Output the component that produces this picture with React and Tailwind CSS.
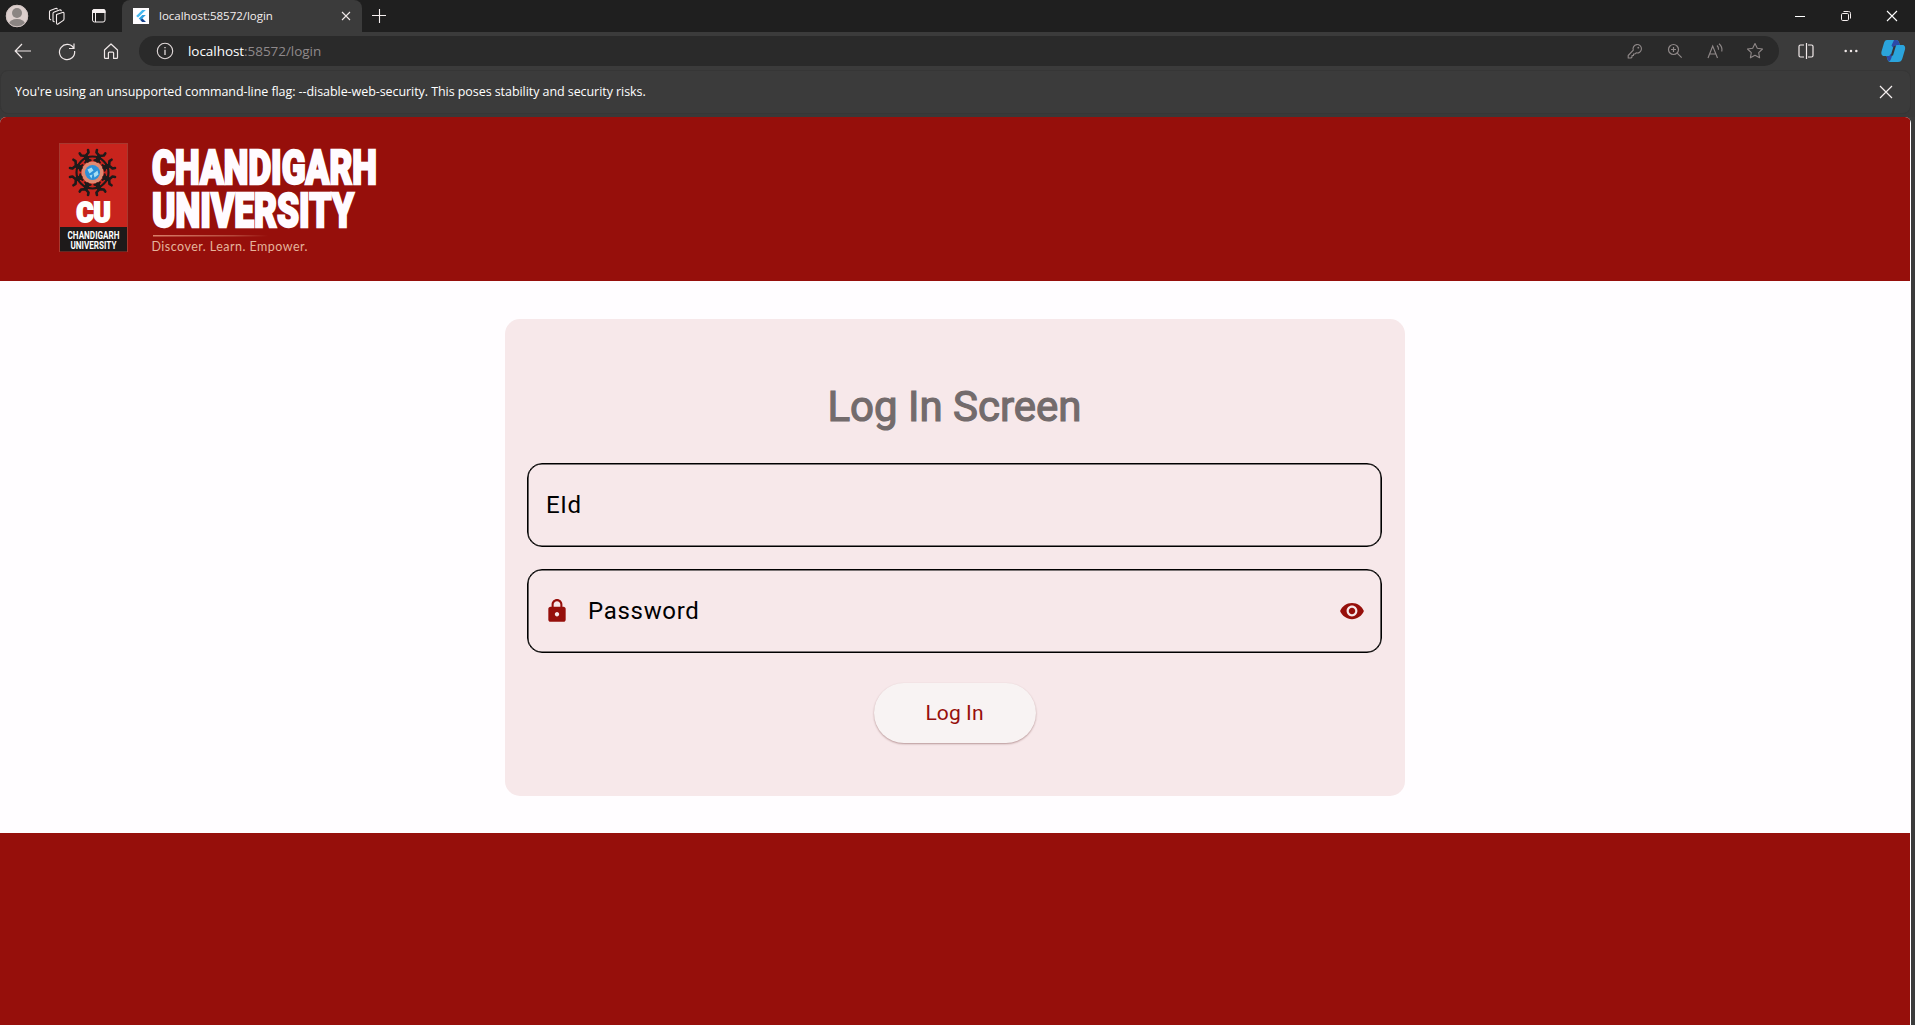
import React from "react";

function Svg({ w, h, vb, className, children }) {
  return (
    <svg width={w} height={h} viewBox={vb || `0 0 ${w} ${h}`} fill="none" className={`block shrink-0 overflow-visible ${className || ""}`}>
      {children}
    </svg>
  );
}

function Avatar() {
  return (
    <Svg w={24} h={24} className="ml-[5px]">
      <clipPath id="avatar"><circle cx="12" cy="12" r="11" /></clipPath>
      <circle cx="12" cy="12" r="11" fill="#dccfcd" />
      <g clipPath="url(#avatar)" fill="#8b8583">
        <circle cx="12" cy="9" r="5" />
        <ellipse cx="12" cy="20" rx="8" ry="5" />
      </g>
      <circle cx="12" cy="12" r="10.8" stroke="#cfc2c0" />
    </Svg>
  );
}

function TabStrip() {
  return (
    <div className="flex h-8 bg-[#1f1f1f]">
      <div className="flex w-[122px] shrink-0 items-center">
        <Avatar />
        <Svg w={17} h={17} className="ml-[19px]">
          <g stroke="#f3ecec" strokeWidth="1.1" strokeLinejoin="round" strokeLinecap="round">
            <path d="M8.500 6.500 14.500 4.500c.9-.3 1.500.1 1.500 1V11c0 .8-.3 1.200-1 1.600L10 16c-.9.500-1.500 0-1.500-.9z" />
            <path d="M5 13V5.500c0-.7.2-1 .8-1.300L11.500 2c.8-.3 1.500 0 1.800.7M5 13l1.200.7" />
            <path d="M1.500 11V3.700c0-.7.2-1 .8-1.300L7.500.5c.8-.3 1.500-.1 1.800.5M1.500 11l1.200.7" />
          </g>
        </Svg>
        <Svg w={16} h={16} className="ml-[26px]">
          <rect x="1.500" y="1.500" width="12.500" height="12.500" rx="2" stroke="#f6f0f0" />
          <path d="M1 3.500C1 2 2 1 3.500 1h9C14 1 14.500 2 14.500 3.500V5H1z" fill="#f6f0f0" />
          <path d="M4.500 5v9" stroke="#f6f0f0" />
        </Svg>
      </div>
      <div className="flex w-[240px] items-center rounded-t-lg bg-[#3b3b3b]">
        <Svg w={16} h={16} className="ml-[11px]">
          <rect width="16" height="16" fill="#fffdff" />
          <path d="M9.300 2h3.500L5 9.600 3.200 7.900z" fill="#45b8ef" />
          <path d="M9.300 7h3.500L9.300 10.500l3.500 3.500H9.300L5.800 10.500z" fill="#2f9fe0" />
          <path d="m7.600 12.200 1.700-1.700 3.500 3.500H9.300z" fill="#1c3f88" />
        </Svg>
        <span className="ml-[10px] w-[113px] whitespace-nowrap font-['Open_Sans',sans-serif] text-[11.500px] leading-4 tracking-[-0.02px] text-[#f5efef]">
          localhost:58572/login
        </span>
        <Svg w={10} h={10} className="ml-[69px]">
          <path d="m1 1 8 8M9 1 1 9" stroke="#efe8e8" strokeWidth="1.100" />
        </Svg>
      </div>
      <Svg w={14} h={14} className="ml-[10px] mt-[9px]">
        <path d="M7.500 0v14M0 6.500h14" stroke="#f6f0f0" strokeWidth="1.100" />
      </Svg>
      <div className="ml-auto flex items-center">
        <Svg w={10} h={10} className="mr-[36px]">
          <path d="M0 5.500h10" stroke="#fff" />
        </Svg>
        <Svg w={10} h={10} className="mr-[36px]">
          <rect x=".5" y="2.500" width="7" height="7" rx="1.200" stroke="#f6f0f0" />
          <path d="M2.500.5h5c1.300 0 2 .7 2 2v5" stroke="#f6f0f0" />
        </Svg>
        <Svg w={10} h={10} className="mr-[18px]">
          <path d="m0 0 10 10M10 0 0 10" stroke="#fff" strokeWidth="1.100" />
        </Svg>
      </div>
    </div>
  );
}

function Toolbar() {
  return (
    <div className="flex h-[38px] items-center bg-[#3b3b3b]">
      <Svg w={18} h={18} className="ml-[14px]">
        <path d="M17 9H1.500M8 2 1.200 9 8 16" stroke="#efe8e8" strokeWidth="1.200" />
      </Svg>
      <Svg w={18} h={18} className="ml-[26px]">
        <path d="M15.800 6.500A7.600 7.600 0 1 0 16.600 9M16 1.500v5h-5" stroke="#efe8e8" strokeWidth="1.200" />
      </Svg>
      <Svg w={16} h={18} className="ml-[27px]">
        <path d="M1.500 8 8 2l6.500 6v7.500c0 .6-.3.900-.9.900h-3V11c0-.6-.3-.9-.9-.9H6.300c-.6 0-.9.300-.9.900v5.400h-3c-.600 0-.900-.3-.900-.9z" stroke="#efe8e8" strokeWidth="1.200" strokeLinejoin="round" />
      </Svg>
      <div className="ml-5 flex h-[30px] w-[1640px] items-center rounded-full bg-[#2a2a2a]">
        <Svg w={18} h={18} className="ml-[17px]">
          <circle cx="9" cy="9" r="7.700" stroke="#e2dada" strokeWidth="1.100" />
          <path d="M9 7.800V13M9 4.900v1.400" stroke="#e2dada" strokeWidth="1.300" />
        </Svg>
        <span className="ml-[14px] whitespace-nowrap font-['Open_Sans',sans-serif] text-[13.500px] leading-5 tracking-[-0.05px] text-[#8f898b]">
          <span className="text-white">localhost</span>:58572/login
        </span>
        <div className="ml-auto mr-[15px] flex items-center text-[#8f8888]">
          <Svg w={16} h={16}>
            <path d="M6.300 7.200a4.200 4.200 0 1 1 2.800 2.600L8 11H6.500v1.500H5V14l-1 1H1.200v-2.500z" stroke="currentColor" strokeWidth="1.100" strokeLinejoin="round" />
            <circle cx="11.300" cy="4.700" r=".9" fill="currentColor" />
          </Svg>
          <Svg w={16} h={16} className="ml-6">
            <circle cx="6.500" cy="6.500" r="5" stroke="currentColor" strokeWidth="1.200" />
            <path d="m10.200 10.200 4.500 4.500M6.500 4v5M4 6.500h5" stroke="currentColor" strokeWidth="1.200" />
          </Svg>
          <Svg w={17} h={16} className="ml-6">
            <path d="M1 15 5.700 3 10.500 15M2.600 11h6.200M10 2.500c1.300 1.200 1.700 2.600 1.500 4.200M12 .7c2.500 2 3.400 4.600 2.800 7.800" stroke="currentColor" strokeWidth="1.150" />
          </Svg>
          <Svg w={18} h={18} className="ml-[22px]">
            <path d="m9 1.500 2.300 4.800 5.200.7-3.800 3.600.9 5.200L9 13.300l-4.600 2.500.9-5.200L1.500 7l5.200-.7z" stroke="currentColor" strokeWidth="1.100" strokeLinejoin="round" />
          </Svg>
        </div>
      </div>
      <Svg w={16} h={16} className="ml-[19px]">
        <path d="M6 2H2.500C1.500 2 1 2.500 1 3.500v9c0 1 .5 1.500 1.500 1.500H6M10 2h3.500c1 0 1.500.5 1.500 1.500v9c0 1-.5 1.500-1.500 1.500H10M8.500 0v16" stroke="#f3ecec" strokeWidth="1.200" />
      </Svg>
      <Svg w={14} h={4} className="ml-[30px]">
        <g fill="#efe8e8"><circle cx="1.700" cy="2" r="1.250" /><circle cx="7" cy="2" r="1.250" /><circle cx="12.300" cy="2" r="1.250" /></g>
      </Svg>
      <Svg w={24} h={24} className="ml-[23px]">
        <path d="M6 1h9c2 0 2.500 1 3 2.500L19 6h2.500C24 6 24.500 8.500 24 10.500l-2.500 8.500c-1 3-2 4-4.500 4H9.500c-2 0-2.500-1-3-2.500L5.500 17H3c-2.500 0-3-2.500-2.500-4.500L3 4c.7-2 1.500-3 3-3z" fill="#2ba4dc" />
        <path d="M13 1h2c2 0 2.500 1 3 2.500L19 6h-2.500c-1.800 0-2.500 1-3 2.500l-1.500 0-1.500-2z" fill="#2c49a8" />
        <path d="M5.500 17H7c1.500 0 2-.8 2.500-2.300l1.500 2.300-1 3c-.5 1.500-1.200 2.300-2.200 2-.7-.2-1-1-1.300-1.500z" fill="#2c49a8" />
        <path d="M12.500 7.500 15 6.500 12 16.500 9.700 16.800z" fill="#343338" />
      </Svg>
    </div>
  );
}

function InfoBar() {
  return (
    <div className="h-[47px] bg-[#393939]">
      <div className="flex h-[44px] w-[1911px] items-center rounded-[8px] border border-[#363636] bg-[#3b3b3b]">
        <span className="ml-[14px] whitespace-nowrap font-['Open_Sans',sans-serif] text-[12.500px] leading-5 tracking-[-0.065px] text-white">
          You're using an unsupported command-line flag: --disable-web-security. This poses stability and security risks.
        </span>
        <Svg w={12} h={12} className="ml-auto mr-[18px]">
          <path d="m0 0 12 12M12 0 0 12" stroke="#f6f0f0" strokeWidth="1.200" />
        </Svg>
      </div>
    </div>
  );
}

const FIGURES = [22.5, 67.5, 112.5, 157.5, 202.5, 247.5, 292.5, 337.5];

function Logo() {
  return (
    <Svg w={320} h={110}>
      <rect x=".5" y=".5" width="68" height="108" fill="#c8241d" stroke="#a8382f" />
      <rect x="1" y="84" width="67" height="24.500" fill="#1e1a1a" />
      <g transform="translate(33.500 29.500)">
        <circle r="11" fill="#e08a72" />
        <circle r="16" stroke="#1e1a1a" strokeWidth="2.200" />
        {FIGURES.map((a) => (
          <g key={a} transform={`rotate(${a})`} stroke="#1e1a1a" strokeLinecap="round" strokeLinejoin="round">
            <path d="M0-13v-4" strokeWidth="4.500" />
            <path d="M0-18-4-20-4.500-22.500M0-18l4-2 .5-2.500" strokeWidth="2.600" />
            <path d="M0-14-3-12M0-14l3 2" strokeWidth="2" />
          </g>
        ))}
        <circle r="7.500" fill="#2b8fd8" />
        <path d="M-5-3-1-5 1-2-3 1zM1 1l4-3 1 4-4 3zM-3 3l3-1-1 4z" fill="#a5def4" />
      </g>
      <text x="17.500" y="78.500" textLength="34" lengthAdjust="spacingAndGlyphs" fill="#fff" stroke="#fff" strokeWidth="2" className="font-[Roboto,sans-serif] text-[27px] font-black">CU</text>
      <text x="8.500" y="96" textLength="52" lengthAdjust="spacingAndGlyphs" fill="#fff" className="font-[Roboto,sans-serif] text-[10px] font-bold">CHANDIGARH</text>
      <text x="11.500" y="105.500" textLength="46" lengthAdjust="spacingAndGlyphs" fill="#fff" className="font-[Roboto,sans-serif] text-[10px] font-bold">UNIVERSITY</text>
      <g fill="#fffbff" stroke="#fffbff" strokeWidth="2.400" className="font-[Roboto,sans-serif] text-[47.500px] font-black">
        <text x="93" y="40.600" textLength="225" lengthAdjust="spacingAndGlyphs">CHANDIGARH</text>
        <text x="93" y="84.300" textLength="202" lengthAdjust="spacingAndGlyphs">UNIVERSITY</text>
      </g>
      <linearGradient id="rule" x1="0" x2="1"><stop offset="0" stopColor="#d9806a" /><stop offset=".7" stopColor="#b5473a" /><stop offset="1" stopColor="#960f0b" /></linearGradient>
      <rect x="94" y="92" width="115" height="1.500" fill="url(#rule)" />
      <text x="92.500" y="107.500" textLength="156" fill="#e5b39b" className="[font-family:Lato,sans-serif] text-[12.500px]">Discover. Learn. Empower.</text>
    </Svg>
  );
}

function Field({ children }) {
  return (
    <div className="flex h-[84px] items-center rounded-[15px] border border-black pl-[18px] pr-[17px] font-[Roboto,sans-serif] text-[24px] tracking-[0.7px] text-black shadow-[inset_0_0_0_0.6px_#000]">
      {children}
    </div>
  );
}

export default function App() {
  return (
    <div className="flex h-[1025px] w-[1915px] flex-col overflow-hidden bg-[#3b3b3b]">
      <TabStrip />
      <Toolbar />
      <InfoBar />
      <div className="w-[1911px] flex-1 overflow-hidden rounded-t-[6px] bg-[#fffdff]">
        <header className="h-[164px] w-[1910px] bg-[#960f0b] pl-[59px] pt-[26px]">
          <Logo />
        </header>
        <main className="flex h-[552px] w-[1910px] justify-center pt-[37.500px]">
          <form className="flex h-[477px] w-[900px] flex-col rounded-[15px] bg-[#f7e8ea] pl-[22px] pr-[23px] pt-[63px]">
            <h1 className="h-[81px] whitespace-nowrap text-center font-[Roboto,sans-serif] text-[42px] leading-[50px] text-[#736b6c] [-webkit-text-stroke:1.200px_#736b6c]">
              Log In Screen
            </h1>
            <Field>EId</Field>
            <div className="h-[22.500px]" />
            <Field>
              <Svg w={26} h={26} vb="0 0 24 24" className="-ml-[2px]">
                <path fill="#960f0b" d="M18 8h-1V6c0-2.760-2.240-5-5-5S7 3.240 7 6v2H6c-1.100 0-2 .9-2 2v10c0 1.100.9 2 2 2h12c1.100 0 2-.9 2-2V10c0-1.100-.9-2-2-2zm-6 9c-1.100 0-2-.9-2-2s.9-2 2-2 2 .9 2 2-.9 2-2 2zm3.100-9H8.900V6c0-1.710 1.390-3.100 3.100-3.100s3.100 1.390 3.100 3.100v2z" />
              </Svg>
              <span className="ml-[18px]">Password</span>
              <Svg w={26} h={26} vb="0 0 24 24" className="ml-auto -mr-[1px]">
                <path fill="#960f0b" d="M12 4.500C7 4.500 2.730 7.610 1 12c1.730 4.390 6 7.500 11 7.500s9.270-3.110 11-7.500c-1.730-4.390-6-7.500-11-7.500zM12 17c-2.760 0-5-2.240-5-5s2.240-5 5-5 5 2.240 5 5-2.240 5-5 5zm0-8c-1.660 0-3 1.340-3 3s1.340 3 3 3 3-1.340 3-3-1.340-3-3-3z" />
              </Svg>
            </Field>
            <button type="button" className="mt-[30px] h-[60px] w-[162px] self-center rounded-full bg-[#f8f3f3] pt-[2px] font-[Roboto,sans-serif] text-[21px] tracking-[0.1px] text-[#960f0b] shadow-[0_1px_2px_rgba(90,30,30,0.4)]">
              Log In
            </button>
          </form>
        </main>
        <footer className="h-[192px] w-[1910px] bg-[#960f0b]" />
      </div>
    </div>
  );
}
